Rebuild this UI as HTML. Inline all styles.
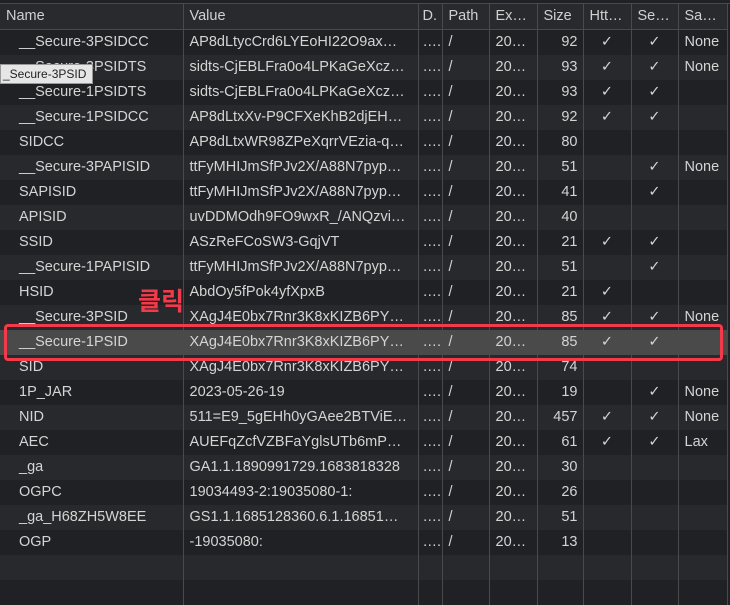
<!DOCTYPE html>
<html><head><meta charset="utf-8"><style>
body{margin:0;width:730px;height:587px;overflow:hidden;background:#202124;font-family:"Liberation Sans",Arial,sans-serif;font-size:14.5px;color:#d4d4d4;position:relative}
table{border-collapse:collapse;table-layout:fixed;width:727px;position:absolute;left:0;top:4px}
td,th{height:25px;padding:0 0 0 6px;white-space:nowrap;overflow:hidden;border-right:1px solid #4a4a4a;font-weight:normal;text-align:left;line-height:25px}
th{height:24px;background:#292a2d;color:#d0d0d0;border-bottom:1px solid #4a4a4a}
tr:nth-child(odd) td{background:#28292c}
tr:nth-child(even) td{background:#202124}
td.n{padding-left:19px}
td.d{padding-left:4px}
td.s{text-align:right;padding-right:5px}
td.c{text-align:center;padding:0}
tr.hl td{background:#4a4a4a}
.top{position:absolute;left:0;top:0;width:730px;height:3px;background:#202124;border-bottom:1px solid #4a4a4a}
.box{position:absolute;left:4px;top:324px;width:713px;height:31px;border:3px solid #f23a4a;border-radius:4px}
.ko{position:absolute;left:138px;top:282px;color:#f23a4a;font-weight:bold;font-size:25px;font-family:"Liberation Sans","Noto Sans CJK KR",sans-serif}
.tip{position:absolute;left:0;top:64px;height:18px;padding:0 6px 0 2px;background:#e6e6e6;color:#222;font-size:12px;line-height:18px;border:1px solid #999}
</style></head><body>
<div class="top"></div>
<table>
<colgroup><col style="width:183px"><col style="width:235px"><col style="width:24px"><col style="width:47px"><col style="width:48px"><col style="width:46px"><col style="width:48px"><col style="width:47px"><col style="width:49px"></colgroup>
<tr><th>Name</th><th>Value</th><th style="padding-left:4px">D.</th><th>Path</th><th>Ex…</th><th>Size</th><th>Htt…</th><th>Se…</th><th>Sa…</th></tr>
<tr><td class="n">__Secure-3PSIDCC</td><td>AP8dLtycCrd6LYEoHI22O9ax…</td><td class="d">….</td><td>/</td><td>20…</td><td class="s">92</td><td class="c">✓</td><td class="c">✓</td><td>None</td></tr>
<tr><td class="n">__Secure-3PSIDTS</td><td>sidts-CjEBLFra0o4LPKaGeXcz…</td><td class="d">….</td><td>/</td><td>20…</td><td class="s">93</td><td class="c">✓</td><td class="c">✓</td><td>None</td></tr>
<tr><td class="n">__Secure-1PSIDTS</td><td>sidts-CjEBLFra0o4LPKaGeXcz…</td><td class="d">….</td><td>/</td><td>20…</td><td class="s">93</td><td class="c">✓</td><td class="c">✓</td><td></td></tr>
<tr><td class="n">__Secure-1PSIDCC</td><td>AP8dLtxXv-P9CFXeKhB2djEH…</td><td class="d">….</td><td>/</td><td>20…</td><td class="s">92</td><td class="c">✓</td><td class="c">✓</td><td></td></tr>
<tr><td class="n">SIDCC</td><td>AP8dLtxWR98ZPeXqrrVEzia-q…</td><td class="d">….</td><td>/</td><td>20…</td><td class="s">80</td><td></td><td></td><td></td></tr>
<tr><td class="n">__Secure-3PAPISID</td><td>ttFyMHIJmSfPJv2X/A88N7pyp…</td><td class="d">….</td><td>/</td><td>20…</td><td class="s">51</td><td></td><td class="c">✓</td><td>None</td></tr>
<tr><td class="n">SAPISID</td><td>ttFyMHIJmSfPJv2X/A88N7pyp…</td><td class="d">….</td><td>/</td><td>20…</td><td class="s">41</td><td></td><td class="c">✓</td><td></td></tr>
<tr><td class="n">APISID</td><td>uvDDMOdh9FO9wxR_/ANQzvi…</td><td class="d">….</td><td>/</td><td>20…</td><td class="s">40</td><td></td><td></td><td></td></tr>
<tr><td class="n">SSID</td><td>ASzReFCoSW3-GqjVT</td><td class="d">….</td><td>/</td><td>20…</td><td class="s">21</td><td class="c">✓</td><td class="c">✓</td><td></td></tr>
<tr><td class="n">__Secure-1PAPISID</td><td>ttFyMHIJmSfPJv2X/A88N7pyp…</td><td class="d">….</td><td>/</td><td>20…</td><td class="s">51</td><td></td><td class="c">✓</td><td></td></tr>
<tr><td class="n">HSID</td><td>AbdOy5fPok4yfXpxB</td><td class="d">….</td><td>/</td><td>20…</td><td class="s">21</td><td class="c">✓</td><td></td><td></td></tr>
<tr><td class="n">__Secure-3PSID</td><td>XAgJ4E0bx7Rnr3K8xKIZB6PY…</td><td class="d">….</td><td>/</td><td>20…</td><td class="s">85</td><td class="c">✓</td><td class="c">✓</td><td>None</td></tr>
<tr class="hl"><td class="n">__Secure-1PSID</td><td>XAgJ4E0bx7Rnr3K8xKIZB6PY…</td><td class="d">….</td><td>/</td><td>20…</td><td class="s">85</td><td class="c">✓</td><td class="c">✓</td><td></td></tr>
<tr><td class="n">SID</td><td>XAgJ4E0bx7Rnr3K8xKIZB6PY…</td><td class="d">….</td><td>/</td><td>20…</td><td class="s">74</td><td></td><td></td><td></td></tr>
<tr><td class="n">1P_JAR</td><td>2023-05-26-19</td><td class="d">….</td><td>/</td><td>20…</td><td class="s">19</td><td></td><td class="c">✓</td><td>None</td></tr>
<tr><td class="n">NID</td><td>511=E9_5gEHh0yGAee2BTViE…</td><td class="d">….</td><td>/</td><td>20…</td><td class="s">457</td><td class="c">✓</td><td class="c">✓</td><td>None</td></tr>
<tr><td class="n">AEC</td><td>AUEFqZcfVZBFaYglsUTb6mP…</td><td class="d">….</td><td>/</td><td>20…</td><td class="s">61</td><td class="c">✓</td><td class="c">✓</td><td>Lax</td></tr>
<tr><td class="n">_ga</td><td>GA1.1.1890991729.1683818328</td><td class="d">….</td><td>/</td><td>20…</td><td class="s">30</td><td></td><td></td><td></td></tr>
<tr><td class="n">OGPC</td><td>19034493-2:19035080-1:</td><td class="d">….</td><td>/</td><td>20…</td><td class="s">26</td><td></td><td></td><td></td></tr>
<tr><td class="n">_ga_H68ZH5W8EE</td><td>GS1.1.1685128360.6.1.16851…</td><td class="d">….</td><td>/</td><td>20…</td><td class="s">51</td><td></td><td></td><td></td></tr>
<tr><td class="n">OGP</td><td>-19035080:</td><td class="d">….</td><td>/</td><td>20…</td><td class="s">13</td><td></td><td></td><td></td></tr>
<tr><td></td><td></td><td></td><td></td><td></td><td></td><td></td><td></td><td></td></tr>
<tr><td></td><td></td><td></td><td></td><td></td><td></td><td></td><td></td><td></td></tr>
</table>
<div class="box"></div>
<div class="ko">클릭</div>
<div class="tip">_Secure-3PSID</div>
</body></html>
